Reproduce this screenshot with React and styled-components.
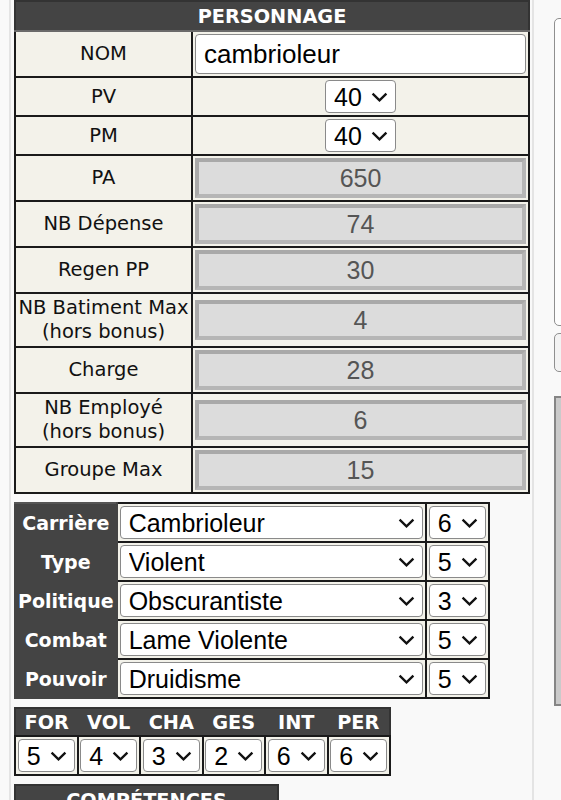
import React from "react";
import styled, { createGlobalStyle } from "styled-components";

const GlobalStyle = createGlobalStyle`
  html, body {
    margin: 0;
    padding: 0;
    background: #f9f9f9;
    overflow: hidden;
  }
  body {
    font-family: "DejaVu Sans", Verdana, sans-serif;
  }
`;

const Page = styled.div`
  display: flex;
  align-items: flex-start;
  width: 900px;
`;

const Panel = styled.div`
  flex: 0 0 auto;
  margin-left: 9px;
  padding: 0 2px 0 3px;
  border-left: 2px solid #e4e4e4;
  border-right: 2px solid #e4e4e4;
  min-height: 800px;
  display: flex;
  flex-direction: column;
  align-items: flex-start;
  gap: 8px;
`;

const Side = styled.div`
  flex: 0 0 220px;
  margin-left: 20px;
  padding-top: 18px;
  display: flex;
  flex-direction: column;
  gap: 7px;
`;

const NoteArea = styled.div`
  height: 306px;
  border: 1px solid #8f8f8f;
  border-radius: 5px;
  background: #fdfdfd;
`;

const SideButton = styled.div`
  height: 37px;
  border: 1px solid #8f8f8f;
  border-radius: 5px;
  background: #f3f3f3;
  margin-bottom: 17px;
`;

const SideBox = styled.div`
  height: 306px;
  border: 2px solid #858585;
  background: #cacaca;
`;

const Sheet = styled.table`
  border-collapse: collapse;
  width: ${(p) => p.$w}px;
  border: 2px solid #333;
  font-size: 19.5px;
`;

const HeadCell = styled.th`
  background: #444;
  color: #fff;
  font-weight: bold;
  font-size: 19.3px;
  height: ${(p) => p.$h || 28}px;
  padding: 0;
  text-align: center;
  border-bottom: 2px solid ${(p) => p.$line || "#6a6a6a"};
`;

const LabelCell = styled.td`
  background: #f3f2ea;
  color: #111;
  border: 2px solid #1a1a1a;
  text-align: center;
  padding: 2px 1px;
  line-height: 24px;
  width: 173px;
`;

const DarkLabel = styled.td`
  background: #444;
  color: #fff;
  font-weight: bold;
  font-size: 19px;
  border: 2px solid #444;
  border-top-color: #555;
  text-align: center;
  padding: 0 2px;
  width: 98px;
`;

const ValueCell = styled.td`
  background: #f3f2ea;
  border: 2px solid #1a1a1a;
  padding: 2px;
  text-align: center;
`;

const TextField = styled.input`
  display: block;
  box-sizing: border-box;
  width: 100%;
  height: 40px;
  padding: 0 8px;
  font: 26px "Liberation Sans", Arial, sans-serif;
  color: #000;
  background: #fff;
  border: 1px solid #8a8a8a;
  border-radius: 4px;
`;

const ReadOnly = styled.input`
  display: block;
  box-sizing: border-box;
  width: 100%;
  height: 40px;
  padding: 0;
  font: 25px "Liberation Sans", Arial, sans-serif;
  color: #555;
  text-align: center;
  background: #dcdcdc;
  border: 4px solid;
  border-color: #a9a9a9 #b6b6b6 #b6b6b6 #a9a9a9;
`;

const SelectBox = styled.span`
  position: relative;
  display: inline-block;
  vertical-align: middle;
  width: ${(p) => p.$w}px;
`;

const NativeSelect = styled.select`
  appearance: none;
  display: block;
  box-sizing: border-box;
  width: 100%;
  height: 33px;
  padding: 0 30px 0 8px;
  font: 25px "Liberation Sans", Arial, sans-serif;
  color: #000;
  background: #fff;
  border: 1px solid #8a8a8a;
  border-radius: 4px;
`;

const Chevron = styled.svg`
  position: absolute;
  right: 8px;
  top: 50%;
  margin-top: -5px;
  width: 17px;
  height: 10px;
  pointer-events: none;
`;

const Select = ({ w, value, options }) => (
  <SelectBox $w={w}>
    <NativeSelect defaultValue={value}>
      {options.map((o) => (
        <option key={o}>{o}</option>
      ))}
    </NativeSelect>
    <Chevron viewBox="0 0 17 10">
      <path d="M1.6 1.6 L8.5 8.4 L15.4 1.6" fill="none" stroke="#111" strokeWidth="2.3" />
    </Chevron>
  </SelectBox>
);

const StatCell = styled.td`
  background: #f3f2ea;
  border: 2px solid #1a1a1a;
  padding: 2px 1px;
  text-align: center;
`;

const levels = ["1", "2", "3", "4", "5", "6"];

const readonlyRows = [
  ["PA", "650"],
  ["NB Dépense", "74"],
  ["Regen PP", "30"],
  ["NB Batiment Max", "4", "(hors bonus)"],
  ["Charge", "28"],
  ["NB Employé", "6", "(hors bonus)"],
  ["Groupe Max", "15"],
];

const profile = [
  ["Carrière", "Cambrioleur", "6"],
  ["Type", "Violent", "5"],
  ["Politique", "Obscurantiste", "3"],
  ["Combat", "Lame Violente", "5"],
  ["Pouvoir", "Druidisme", "5"],
];

const stats = [
  ["FOR", "5"],
  ["VOL", "4"],
  ["CHA", "3"],
  ["GES", "2"],
  ["INT", "6"],
  ["PER", "6"],
];

export default function App() {
  return (
    <>
      <GlobalStyle />
      <Page>
        <Panel>
          <Sheet $w={516}>
            <tbody>
              <tr>
                <HeadCell colSpan={2}>PERSONNAGE</HeadCell>
              </tr>
              <tr>
                <LabelCell>NOM</LabelCell>
                <ValueCell>
                  <TextField defaultValue="cambrioleur" />
                </ValueCell>
              </tr>
              <tr>
                <LabelCell>PV</LabelCell>
                <ValueCell>
                  <Select w={71} value="40" options={["10", "20", "30", "40"]} />
                </ValueCell>
              </tr>
              <tr>
                <LabelCell>PM</LabelCell>
                <ValueCell>
                  <Select w={71} value="40" options={["10", "20", "30", "40"]} />
                </ValueCell>
              </tr>
              {readonlyRows.map(([label, value, sub]) => (
                <tr key={label}>
                  <LabelCell>
                    {label}
                    {sub && <br />}
                    {sub}
                  </LabelCell>
                  <ValueCell>
                    <ReadOnly readOnly value={value} />
                  </ValueCell>
                </tr>
              ))}
            </tbody>
          </Sheet>

          <Sheet $w={475}>
            <tbody>
              {profile.map(([label, value, level]) => (
                <tr key={label}>
                  <DarkLabel>{label}</DarkLabel>
                  <ValueCell>
                    <Select w={303} value={value} options={[value]} />
                  </ValueCell>
                  <ValueCell>
                    <Select w={57} value={level} options={levels} />
                  </ValueCell>
                </tr>
              ))}
            </tbody>
          </Sheet>

          <Sheet $w={377}>
            <tbody>
              <tr>
                {stats.map(([name]) => (
                  <HeadCell key={name} $h={26} $line="#1a1a1a">
                    {name}
                  </HeadCell>
                ))}
              </tr>
              <tr>
                {stats.map(([name, value]) => (
                  <StatCell key={name}>
                    <Select w={57} value={value} options={levels} />
                  </StatCell>
                ))}
              </tr>
            </tbody>
          </Sheet>

          <Sheet $w={265}>
            <tbody>
              <tr>
                <HeadCell>COMPÉTENCES</HeadCell>
              </tr>
            </tbody>
          </Sheet>
        </Panel>
        <Side>
          <NoteArea />
          <SideButton />
          <SideBox />
        </Side>
      </Page>
    </>
  );
}
